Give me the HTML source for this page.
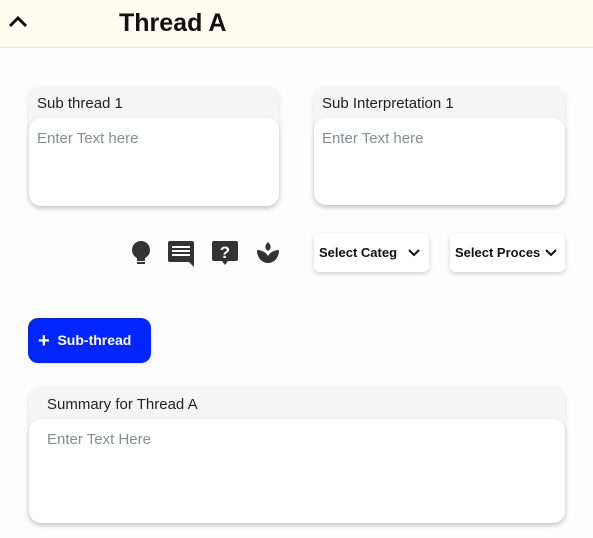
<!DOCTYPE html>
<html><head><style>
body{margin:0;width:593px;height:538px;background:#fdfdfd;font-family:"Liberation Sans",sans-serif;position:relative;overflow:hidden}
.hdr{position:absolute;left:0;top:0;width:593px;height:47px;background:#fdfdf0;border-bottom:1px solid #ececec}
.hdr h1{position:absolute;left:119px;top:9px;margin:0;font-size:25px;font-weight:bold;color:#111}
.card{position:absolute;background:#f5f5f5;border-radius:12px;box-shadow:0 2px 6px rgba(0,0,0,.12)}
.card .lb{position:absolute;left:8px;top:8px;font-size:15px;color:#222}
.card .ta{position:absolute;left:0;right:0;bottom:0;background:#fff;border-radius:12px;box-shadow:0 2px 5px rgba(0,0,0,.15)}
.card .ta span{position:absolute;left:8px;top:12px;font-size:15px;color:#888d94}
.sel{position:absolute;top:233px;width:115px;height:39px;background:#fff;border-radius:6px;box-shadow:0 2px 5px rgba(0,0,0,.18);font-size:13px;font-weight:bold;color:#111;line-height:39px}
.btn{position:absolute;left:28px;top:318px;width:123px;height:45px;background:#0025ff;border-radius:10px;color:#fff;font-size:14px;font-weight:bold;line-height:45px}
</style></head><body>
<div class="hdr">
<svg style="position:absolute;left:8px;top:15px" width="20" height="14" viewBox="0 0 20 14"><path d="M2 11 L10 3 L18 11" stroke="#111" stroke-width="3" fill="none"/></svg>
<h1>Thread A</h1></div>
<div class="card" style="left:29px;top:87px;width:250px;height:119px"><div class="lb">Sub thread 1</div><div class="ta" style="top:31px"><span>Enter Text here</span></div></div>
<div class="card" style="left:314px;top:87px;width:251px;height:118px"><div class="lb">Sub Interpretation 1</div><div class="ta" style="top:31px"><span>Enter Text here</span></div></div>
<svg style="position:absolute;left:128px;top:238px" width="160" height="30" viewBox="0 0 160 30">
<g fill="#333">
<circle cx="13" cy="12" r="9"/><rect x="9" y="18" width="8" height="5"/><rect x="9" y="24" width="8" height="2"/>
<path d="M42 3h22a2 2 0 0 1 2 2v24l-5-5H42a2 2 0 0 1-2-2V5a2 2 0 0 1 2-2z"/>
<path d="M86 3h22a2 2 0 0 1 2 2v16a2 2 0 0 1-2 2h-8l-3 4-3-4h-8a2 2 0 0 1-2-2V5a2 2 0 0 1 2-2z"/>
<path d="M140 4c3 3 4 6 0 9c-4-3-3-6 0-9zM129 12c4 0 9 2 11 6c2-4 7-6 11-6c0 8-5 13-11 13s-11-5-11-13z"/>
</g>
<g fill="#fff"><rect x="44" y="8" width="18" height="2"/><rect x="44" y="12" width="18" height="2"/><rect x="44" y="16" width="18" height="2"/>
<text x="97" y="20" font-size="17" font-weight="bold" text-anchor="middle" font-family="Liberation Sans">?</text></g>
</svg>
<div class="sel" style="left:314px"><span style="margin-left:5px">Select Categ</span><svg style="position:absolute;right:9px;top:15px" width="12" height="9" viewBox="0 0 12 9"><path d="M1 2l5 5 5-5" stroke="#111" stroke-width="2" fill="none"/></svg></div>
<div class="sel" style="left:450px"><span style="margin-left:5px">Select Proces</span><svg style="position:absolute;right:8px;top:15px" width="12" height="9" viewBox="0 0 12 9"><path d="M1 2l5 5 5-5" stroke="#111" stroke-width="2" fill="none"/></svg></div>
<div class="btn"><span style="margin-left:10px;font-size:20px;vertical-align:-2px">+</span>&nbsp; Sub-thread</div>
<div class="card" style="left:29px;top:387px;width:536px;height:136px"><div class="lb" style="left:18px;top:9px">Summary for Thread A</div><div class="ta" style="top:32px"><span style="left:18px">Enter Text Here</span></div></div>
</body></html>
